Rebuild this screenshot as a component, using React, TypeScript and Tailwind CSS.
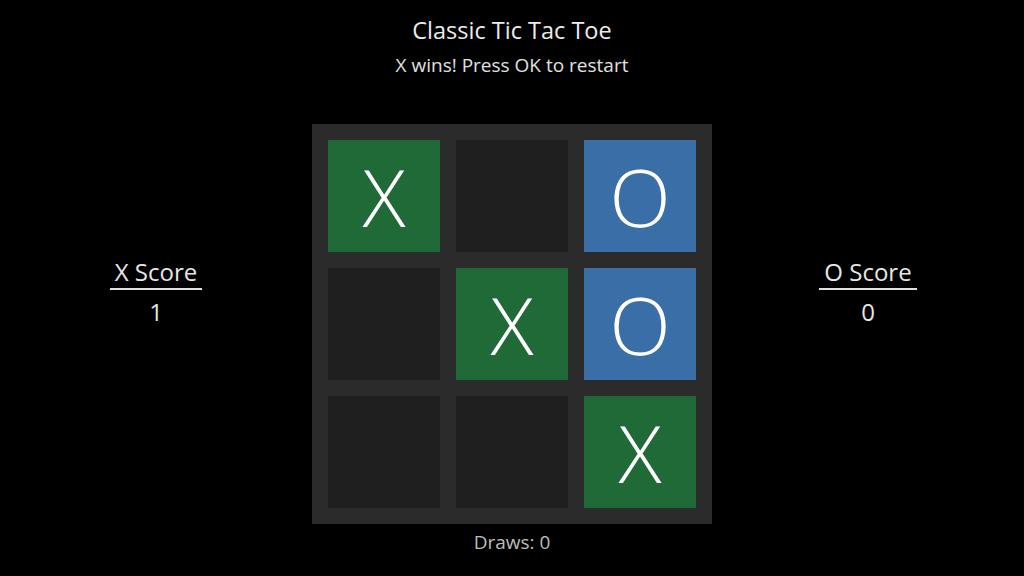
import React from "react";

type Cell = "X" | "O" | null;

const board: Cell[] = ["X", null, "O", null, "X", "O", null, null, "X"];

function Square({ v }: { v: Cell }) {
  const bg = v === "X" ? "bg-[#1f6a37]" : v === "O" ? "bg-[#3a6ea6]" : "bg-[#1f1f1f]";
  return (
    <div className={`${bg} w-[112px] h-[112px] flex items-center justify-center`}>
      {v && (
        <span className="text-[80px] font-light leading-none text-white">{v}</span>
      )}
    </div>
  );
}

function Score({ label, value }: { label: string; value: number }) {
  return (
    <div className="flex flex-col items-center self-start mt-[132px]">
      <div className="text-[24px] leading-[32px] text-[#e6e6e6] px-[5px] border-b-2 border-[#e0e0e0]">
        {label}
      </div>
      <div className="text-[24px] leading-[32px] text-[#e6e6e6] mt-[6px]">{value}</div>
    </div>
  );
}

export default function App() {
  return (
    <div
      className="w-[1024px] h-[576px] bg-black flex flex-col items-center overflow-hidden"
      style={{ fontFamily: '"Open Sans", "Noto Sans", sans-serif' }}
    >
      <div className="pt-[14px] text-[23.5px] leading-[32px] text-[#ececec]">Classic Tic Tac Toe</div>
      <div className="mt-[6px] text-[19px] leading-[26px] text-[#e0e0e0]">X wins! Press OK to restart</div>
      <div className="mt-[46px] w-full grid grid-cols-[1fr_400px_1fr]">
        <div className="flex justify-center">
          <Score label="X Score" value={1} />
        </div>
        <div className="bg-[#2b2b2b] p-[16px] grid grid-cols-3 gap-[16px]">
          {board.map((v, i) => (
            <Square key={i} v={v} />
          ))}
        </div>
        <div className="flex justify-center">
          <Score label="O Score" value={0} />
        </div>
      </div>
      <div className="mt-[5px] text-[19px] leading-[26px] text-[#bdbdbd]">Draws: 0</div>
    </div>
  );
}
